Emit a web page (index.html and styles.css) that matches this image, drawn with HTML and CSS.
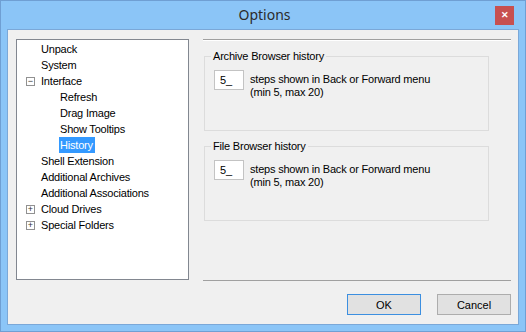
FILE: index.html
```html
<!DOCTYPE html>
<html lang="en">
<head>
<meta charset="UTF-8" />
<title>Options</title>
<link rel="stylesheet" href="styles.css">
</head>
<body>
<div class="window">
  <div class="titlebar">
    <div class="title">Options</div>
    <div class="close">&#x2715;</div>
  </div>

  <div class="client">
    <div class="main">
      <!-- settings tree -->
      <ul class="tree">
        <li class="row lvl1">Unpack</li>
        <li class="row lvl1">System</li>
        <li class="row lvl1"><span class="exp">&minus;</span>Interface</li>
        <li class="row lvl2">Refresh</li>
        <li class="row lvl2">Drag Image</li>
        <li class="row lvl2">Show Tooltips</li>
        <li class="row lvl2"><span class="sel">History</span></li>
        <li class="row lvl1">Shell Extension</li>
        <li class="row lvl1">Additional Archives</li>
        <li class="row lvl1">Additional Associations</li>
        <li class="row lvl1"><span class="exp">+</span>Cloud Drives</li>
        <li class="row lvl1"><span class="exp">+</span>Special Folders</li>
      </ul>

      <!-- page -->
      <div class="page">
        <div class="group">
          <div class="group-title">Archive Browser history</div>
          <div class="field">
            <div class="num">5_</div>
            <div class="hint">steps shown in Back or Forward menu<br>(min 5, max 20)</div>
          </div>
        </div>
        <div class="group">
          <div class="group-title">File Browser history</div>
          <div class="field">
            <div class="num">5_</div>
            <div class="hint">steps shown in Back or Forward menu<br>(min 5, max 20)</div>
          </div>
        </div>
      </div>
    </div>

    <div class="footer">
      <button class="btn default">OK</button>
      <button class="btn">Cancel</button>
    </div>
  </div>
</div>
</body>
</html>
```

FILE: styles.css
```css
html, body {
  margin: 0;
  padding: 0;
  width: 526px;
  height: 332px;
  overflow: hidden;
  font-family: 'Liberation Sans', Arial, sans-serif;
  font-size: 11px;
  letter-spacing: -0.2px;
  color: #000;
}

.window {
  box-sizing: border-box;
  width: 526px;
  height: 332px;
  background: #8bc5f7;
  border: 1px solid #6f9fd3;
  padding: 0 6px 6px 6px;
  display: flex;
  flex-direction: column;
}

.titlebar {
  height: 28px;
  display: flex;
  align-items: flex-start;
}

.title {
  flex: 1;
  text-align: center;
  padding-left: 27px;
  font-family: 'Noto Sans', sans-serif;
  font-size: 14px;
  letter-spacing: 0;
  line-height: 28px;
  color: #2b2b2b;
}

.close {
  width: 19px;
  height: 19px;
  margin: 5px 5px 0 0;
  background: #c75050;
  color: #fff;
  font-size: 9px;
  font-weight: bold;
  letter-spacing: 0;
  line-height: 19px;
  text-align: center;
}

.client {
  flex: 1;
  background: #f0f0f0;
  border: 1px solid #7ba8d8;
  display: flex;
  flex-direction: column;
  padding: 9px 7px 9px 8px;
}

.main {
  display: flex;
  height: 242px;
}

.tree {
  box-sizing: border-box;
  list-style: none;
  margin: 0;
  padding: 1px 0 0 0;
  width: 173px;
  height: 241px;
  background: #fff;
  border: 1px solid #828790;
}

.row {
  height: 16px;
  line-height: 16px;
  display: flex;
  align-items: center;
  white-space: nowrap;
}

.lvl1 { padding-left: 24px; }
.lvl2 { padding-left: 43px; }

.exp {
  box-sizing: border-box;
  width: 9px;
  height: 9px;
  margin-left: -15px;
  margin-right: 6px;
  border: 1px solid #919191;
  font-size: 9px;
  letter-spacing: 0;
  line-height: 7px;
  text-align: center;
  color: #333;
}

.sel {
  background: #3399ff;
  color: #fff;
  padding: 0 2px 0 1px;
  margin-left: -1px;
}

.page {
  box-sizing: border-box;
  width: 308px;
  height: 242px;
  margin-left: 14px;
  border-top: 1px solid #a0a0a0;
  border-bottom: 1px solid #a0a0a0;
  box-shadow: inset 0 1px #fff;
  padding: 16px 0 0 1px;
}

.group {
  box-sizing: border-box;
  width: 285px;
  height: 75px;
  border: 1px solid #dcdcdc;
  margin-bottom: 15px;
  padding: 0 0 0 9px;
}

.group-title {
  display: table;
  margin: -7px 0 0 -3px;
  padding: 0 2px;
  line-height: 13px;
  background: #f0f0f0;
}

.field {
  display: flex;
  margin-top: 7px;
}

.num {
  box-sizing: border-box;
  width: 30px;
  height: 20px;
  background: #fff;
  border: 1px solid #c3c3c3;
  padding-left: 5px;
  line-height: 18px;
}

.hint {
  margin: 3px 0 0 6px;
  line-height: 13px;
}

.footer {
  display: flex;
  justify-content: flex-end;
  gap: 16px;
  margin-top: 13px;
}

.btn {
  box-sizing: border-box;
  width: 74px;
  height: 21px;
  margin: 0;
  padding: 0;
  background: #e1e1e1;
  border: 1px solid #adadad;
  font-family: 'Liberation Sans', Arial, sans-serif;
  font-size: 11px;
  color: #000;
}

.btn.default {
  border-color: #3c8fe0;
}
```
